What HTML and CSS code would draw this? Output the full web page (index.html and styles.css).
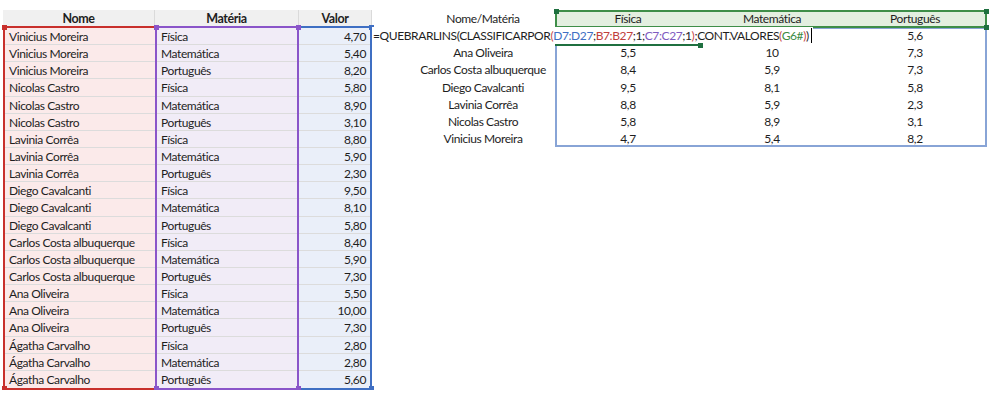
FILE: index.html
```html
<!DOCTYPE html>
<html lang="pt-BR">
<head>
<meta charset="utf-8">
<title>Planilha</title>
<link rel="stylesheet" href="styles.css">
</head>
<body>
<div class="sheet">
  <div class="col col-nome">
    <div class="hd">Nome</div>
    <div class="bd">
      <span class="h h-tl"></span><span class="h h-bl"></span>
      <div class="c">Vinicius Moreira</div>
      <div class="c">Vinicius Moreira</div>
      <div class="c">Vinicius Moreira</div>
      <div class="c">Nicolas Castro</div>
      <div class="c">Nicolas Castro</div>
      <div class="c">Nicolas Castro</div>
      <div class="c">Lavinia Corrêa</div>
      <div class="c">Lavinia Corrêa</div>
      <div class="c">Lavinia Corrêa</div>
      <div class="c">Diego Cavalcanti</div>
      <div class="c">Diego Cavalcanti</div>
      <div class="c">Diego Cavalcanti</div>
      <div class="c">Carlos Costa albuquerque</div>
      <div class="c">Carlos Costa albuquerque</div>
      <div class="c">Carlos Costa albuquerque</div>
      <div class="c">Ana Oliveira</div>
      <div class="c">Ana Oliveira</div>
      <div class="c">Ana Oliveira</div>
      <div class="c">Ágatha Carvalho</div>
      <div class="c">Ágatha Carvalho</div>
      <div class="c">Ágatha Carvalho</div>
    </div>
  </div>
  <div class="col col-materia">
    <div class="hd">Matéria</div>
    <div class="bd">
      <span class="h h-tl"></span><span class="h h-tr"></span><span class="h h-bl"></span><span class="h h-br"></span>
      <div class="c">Física</div>
      <div class="c">Matemática</div>
      <div class="c">Português</div>
      <div class="c">Física</div>
      <div class="c">Matemática</div>
      <div class="c">Português</div>
      <div class="c">Física</div>
      <div class="c">Matemática</div>
      <div class="c">Português</div>
      <div class="c">Física</div>
      <div class="c">Matemática</div>
      <div class="c">Português</div>
      <div class="c">Física</div>
      <div class="c">Matemática</div>
      <div class="c">Português</div>
      <div class="c">Física</div>
      <div class="c">Matemática</div>
      <div class="c">Português</div>
      <div class="c">Física</div>
      <div class="c">Matemática</div>
      <div class="c">Português</div>
    </div>
  </div>
  <div class="col col-valor">
    <div class="hd">Valor</div>
    <div class="bd">
      <span class="h h-tr"></span><span class="h h-br"></span>
      <div class="c">4,70</div>
      <div class="c">5,40</div>
      <div class="c">8,20</div>
      <div class="c">5,80</div>
      <div class="c">8,90</div>
      <div class="c">3,10</div>
      <div class="c">8,80</div>
      <div class="c">5,90</div>
      <div class="c">2,30</div>
      <div class="c">9,50</div>
      <div class="c">8,10</div>
      <div class="c">5,80</div>
      <div class="c">8,40</div>
      <div class="c">5,90</div>
      <div class="c">7,30</div>
      <div class="c">5,50</div>
      <div class="c">10,00</div>
      <div class="c">7,30</div>
      <div class="c">2,80</div>
      <div class="c">2,80</div>
      <div class="c">5,60</div>
    </div>
  </div>

  <div class="pivot">
    <div class="prow phead">
      <div class="p"></div>
      <div class="p">Nome/Matéria</div>
      <div class="p pg">Física</div>
      <div class="p pg">Matemática</div>
      <div class="p pg">Português</div>
    </div>
    <div class="prow"><div class="p"></div><div class="p"></div><div class="p"></div><div class="p"></div><div class="p">5,6</div></div>
    <div class="prow"><div class="p"></div><div class="p">Ana Oliveira</div><div class="p">5,5</div><div class="p">10</div><div class="p">7,3</div></div>
    <div class="prow"><div class="p"></div><div class="p">Carlos Costa albuquerque</div><div class="p">8,4</div><div class="p">5,9</div><div class="p">7,3</div></div>
    <div class="prow"><div class="p"></div><div class="p">Diego Cavalcanti</div><div class="p">9,5</div><div class="p">8,1</div><div class="p">5,8</div></div>
    <div class="prow"><div class="p"></div><div class="p">Lavinia Corrêa</div><div class="p">8,8</div><div class="p">5,9</div><div class="p">2,3</div></div>
    <div class="prow"><div class="p"></div><div class="p">Nicolas Castro</div><div class="p">5,8</div><div class="p">8,9</div><div class="p">3,1</div></div>
    <div class="prow"><div class="p"></div><div class="p">Vinicius Moreira</div><div class="p">4,7</div><div class="p">5,4</div><div class="p">8,2</div></div>

    <div class="spill-box"></div>
    <div class="head-sel"><span class="gh gh-tl"></span><span class="gh gh-tr"></span><span class="gh gh-br"></span></div>
    <div class="editor">=QUEBRARLINS(CLASSIFICARPOR<span class="pr">(</span><span class="rb">D7:D27</span>;<span class="rr">B7:B27</span>;1;<span class="rp">C7:C27</span>;1<span class="pr">)</span>;CONT.VALORES<span class="pr">(</span><span class="rg">G6#</span><span class="pr">)</span>)<span class="caret"></span></div>
    <div class="active-line"><span class="gh gh-end"></span></div>
  </div>
</div>
</body>
</html>
```

FILE: styles.css
```css
* { box-sizing: border-box; }

body {
  margin: 0;
  background: #ffffff;
  font-family: Lato, "Open Sans", sans-serif;
  font-size: 12px;
  letter-spacing: -0.4px;
  color: #1e1e1e;
}

.sheet {
  display: flex;
  align-items: flex-start;
  padding: 10px 0 0 3px;
}

.col { display: flex; flex-direction: column; }
.col-nome { width: 152px; }
.col-materia { width: 144px; }
.col-valor { width: 73px; }

.hd {
  height: 17px;
  line-height: 17px;
  background: #f0f0f0;
  border-right: 1px solid #dadada;
  text-align: center;
  font-weight: 700;
  font-size: 12.5px;
  color: #1e1e1e;
}

.bd {
  position: relative;
  margin-top: -1px;
  border: 2px solid transparent;
}

.col-nome .bd { border-color: #c8302c; border-right: 0; background: #fbeaea; }
.col-materia .bd { border-color: #8a55c9; background: #f1ecf7; }
.col-valor .bd { border-color: #3f6fc3; border-left: 0; background: #eaeff9; }

.c {
  height: 17.15px;
  line-height: 17px;
  padding: 0 4px;
  border-bottom: 1px solid #dcdcdc;
  white-space: nowrap;
  overflow: hidden;
}
.c:last-child { border-bottom: 0; }
.col-valor .c { text-align: right; padding-right: 4px; }

.h {
  position: absolute;
  width: 5px;
  height: 5px;
  z-index: 2;
}
.col-nome .h { background: #c8302c; }
.col-materia .h { background: #8a55c9; }
.col-valor .h { background: #3f6fc3; }
.h-tl { left: -3.5px; top: -3.5px; }
.h-bl { left: -3.5px; bottom: -3.5px; }
.h-tr { right: -3.5px; top: -3.5px; }
.h-br { right: -3.5px; bottom: -3.5px; }

/* pivot table on the right */
.pivot {
  position: relative;
  width: 615px;
  display: flex;
  flex-direction: column;
}

.prow {
  display: grid;
  grid-template-columns: 39px 144px 146px 142px 144px;
  height: 17.2px;
}
.phead { height: 17px; }

.p {
  line-height: 17px;
  text-align: center;
  white-space: nowrap;
  color: #1e1e1e;
}
.pg { background: #e3efe0; }

.spill-box {
  position: absolute;
  left: 183px;
  top: 17px;
  width: 432px;
  height: 120px;
  border: 2px solid #88a4d6;
  z-index: 1;
}

.head-sel {
  position: absolute;
  left: 183px;
  top: 0;
  width: 432px;
  height: 18px;
  border: 2px solid #3e8e48;
  z-index: 2;
}

.gh {
  position: absolute;
  width: 5px;
  height: 5px;
  background: #1f7040;
}
.gh-tl { left: -3.5px; top: -3.5px; }
.gh-tr { right: -3.5px; top: -3.5px; }
.gh-br { right: -3.5px; bottom: -3.5px; }

.editor {
  position: absolute;
  left: 0;
  top: 17px;
  height: 17px;
  line-height: 17px;
  padding: 0 1px;
  background: #ffffff;
  white-space: nowrap;
  color: #1e1e1e;
  z-index: 3;
}
.pr { color: #c94a4a; }
.rb { color: #3f6fc3; }
.rr { color: #c0403c; }
.rp { color: #7f5bbf; }
.rg { color: #3d8a45; }
.caret {
  display: inline-block;
  width: 1px;
  height: 15px;
  margin-left: 2px;
  vertical-align: -3px;
  background: #000000;
}

.active-line {
  position: absolute;
  left: 183px;
  top: 34px;
  width: 145px;
  height: 2px;
  background: #1f7040;
  z-index: 4;
}
.gh-end { right: -3px; top: -1.5px; }
```
